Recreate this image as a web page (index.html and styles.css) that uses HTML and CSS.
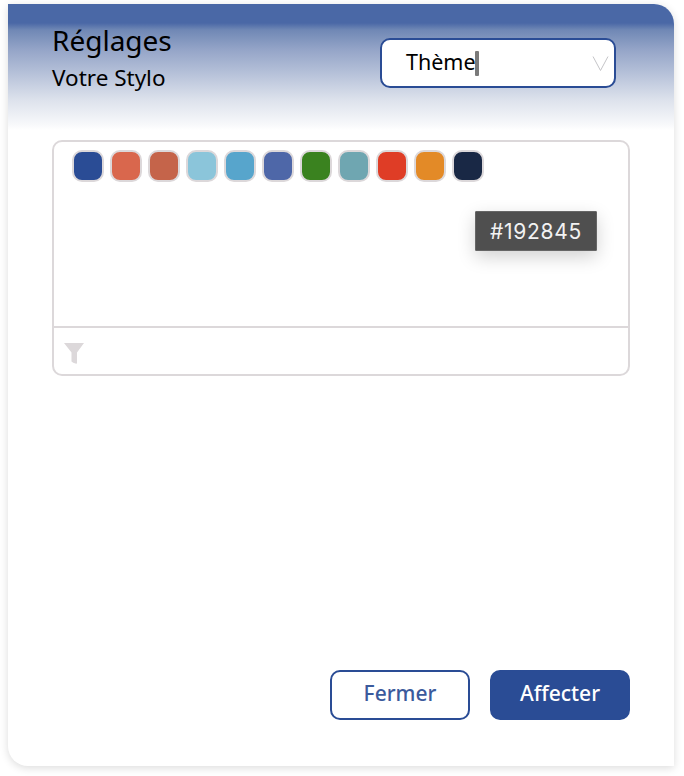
FILE: index.html
```html
<!DOCTYPE html>
<html lang="fr">
<head>
<meta charset="utf-8">
<title>Réglages</title>
<link rel="stylesheet" href="styles.css">
</head>
<body>
<main class="panel">
  <header class="head">
    <div class="titles">
      <h1 class="title">Réglages</h1>
      <p class="subtitle">Votre Stylo</p>
    </div>
    <div class="select">
      <span class="select-text">Thème</span><span class="caret"></span>
      <svg class="chev" width="17" height="17" viewBox="0 0 17 17" aria-hidden="true"><path d="M1 1.5 L8.5 15.5 L16 1.5" fill="none" stroke="#c4c4c8" stroke-width="1"/></svg>
    </div>
  </header>
  <section class="card">
    <div class="swatches">
      <span class="swatch c1"></span>
      <span class="swatch c2"></span>
      <span class="swatch c3"></span>
      <span class="swatch c4"></span>
      <span class="swatch c5"></span>
      <span class="swatch c6"></span>
      <span class="swatch c7"></span>
      <span class="swatch c8"></span>
      <span class="swatch c9"></span>
      <span class="swatch c10"></span>
      <span class="swatch c11"></span>
    </div>
    <div class="filter">
      <svg width="20" height="21" viewBox="0 0 20 21" aria-hidden="true"><path d="M0 0 H20 L13 9.5 V20 Q13 21 11.5 20.5 Q9 20 7.5 18.5 V9.5 Z" fill="#dcd8da"/></svg>
    </div>
    <div class="tooltip">#192845</div>
  </section>
  <footer class="actions">
    <button class="btn btn-outline" type="button"><span class="btn-label">Fermer</span></button>
    <button class="btn btn-solid" type="button"><span class="btn-label">Affecter</span></button>
  </footer>
</main>
</body>
</html>
```

FILE: styles.css
```css
* { box-sizing: border-box; }
html, body { margin: 0; height: 100%; }
body {
  background: #fff;
  padding: 4px 10px 10px 8px;
  font-family: "Noto Sans", "Lato", sans-serif;
  color: #000;
}
.panel {
  height: 762px;
  background: #fff;
  border-radius: 0 20px 0 20px;
  box-shadow: 0 2px 8px rgba(0,0,0,.14);
  display: flex;
  flex-direction: column;
  overflow: hidden;
}
.head {
  height: 126px;
  padding: 20px 58px 0 44px;
  display: flex;
  justify-content: space-between;
  align-items: flex-start;
  background: linear-gradient(to bottom, #4a68a6 0, #4a68a6 19px, #7088b5 26px, #95a5c8 46px, #b8c3da 71px, #dde2ec 96px, #f8f9fb 121px, #fff 126px);
}
.title { margin: 0; font-size: 28px; line-height: 32px; font-weight: 400; }
.subtitle { margin: 9px 0 0; font-size: 22.5px; line-height: 26px; }
.select {
  margin-top: 14px;
  width: 236px;
  height: 50px;
  background: #fff;
  border: 2px solid #2a4c95;
  border-radius: 10px;
  padding-left: 24px;
  display: flex;
  align-items: center;
  position: relative;
  font-size: 21.5px;
}
.select-text { line-height: 24px; margin-top: -2px; }
.caret { width: 4px; height: 25px; background: #7a7a7a; border-radius: 1px; margin-left: -1px; }
.chev { position: absolute; right: 5px; top: 15px; }
.card {
  position: relative;
  margin: 10px 0 0 44px;
  width: 578px;
  height: 236px;
  border: 2px solid #dcd8da;
  border-radius: 10px;
  display: flex;
  flex-direction: column;
}
.swatches {
  height: 186px;
  padding: 8px 0 0 18px;
  display: flex;
  gap: 6px;
  align-items: flex-start;
  border-bottom: 2px solid #dcd8da;
}
.swatch { width: 32px; height: 32px; border-radius: 10px; border: 2px solid #dcd8da; }
.c1 { background: #2a4c95; }
.c2 { background: #d9674d; }
.c3 { background: #c5644a; }
.c4 { background: #8bc5da; }
.c5 { background: #57a5cc; }
.c6 { background: #4e67a8; }
.c7 { background: #3a821f; }
.c8 { background: #6fa6b1; }
.c9 { background: #df3d26; }
.c10 { background: #e38a27; }
.c11 { background: #192845; }
.filter { flex: 1; padding: 15px 0 0 10px; display: flex; align-items: flex-start; }
.tooltip {
  position: absolute;
  left: 421px;
  top: 69px;
  width: 122px;
  height: 40px;
  background: #4f4f4f;
  border: 1px solid #666;
  border-radius: 1px;
  color: #f2f2f2;
  font-family: "Inter", sans-serif;
  font-size: 21px;
  letter-spacing: .7px;
  display: flex;
  align-items: center;
  justify-content: center;
  box-shadow: 0 6px 18px rgba(0,0,0,.18);
}
.actions {
  margin-top: auto;
  padding: 0 44px 46px 0;
  display: flex;
  justify-content: flex-end;
  gap: 20px;
}
.btn {
  width: 140px;
  height: 50px;
  border-radius: 10px;
  font-family: inherit;
  font-size: 21px;
  font-weight: 500;
  border: 2px solid #2a4c95;
  padding: 0 0 4px;
}
.btn-outline { background: #fff; color: #3b5a9c; }
.btn-solid { background: #2a4c95; color: #fff; }
```
